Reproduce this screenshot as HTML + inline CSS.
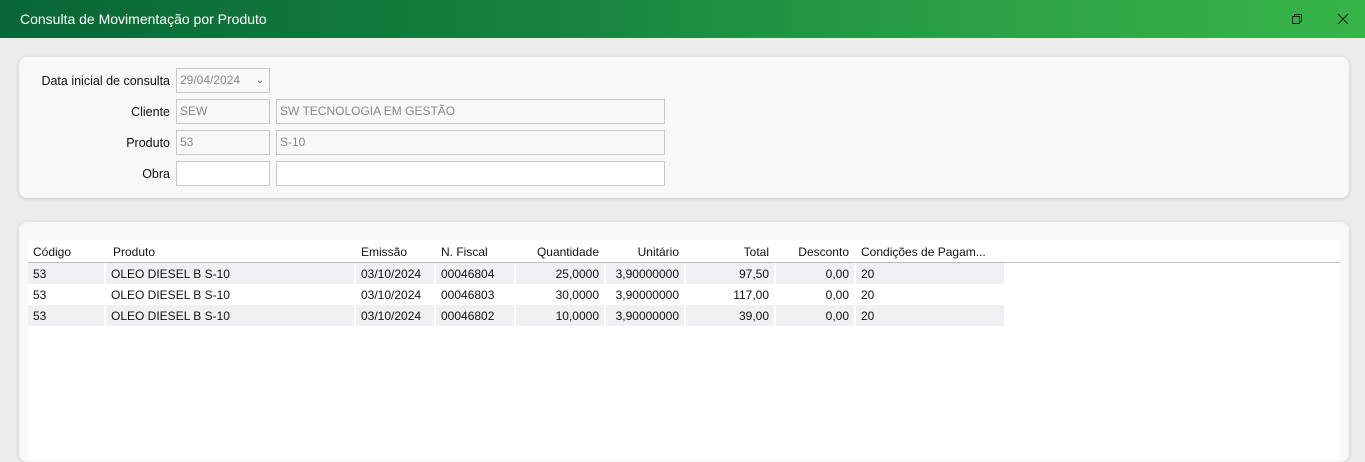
<!DOCTYPE html>
<html><head><meta charset="utf-8"><style>
*{box-sizing:border-box;margin:0;padding:0}
body{width:1365px;height:439px;overflow:hidden;background:#ececec;font-family:"Liberation Sans",sans-serif;font-size:12px;color:#111;position:relative}
.title{position:absolute;left:0;top:0;width:1365px;height:38px;background:linear-gradient(90deg,#086636 0%,#17823f 40%,#2ea446 75%,#38b449 100%);color:#fff;font-size:14px;line-height:38px;padding-left:20px}
.card{position:absolute;left:19px;width:1330px;background:#f8f8f8;border-radius:8px;box-shadow:0 1px 4px rgba(0,0,0,.15)}
.lbl{position:absolute;text-align:right;width:160px;left:-9px;font-size:12.5px}
.inp{position:absolute;height:25px;border:1px solid #c8c8c8;background:#f8f8f8;color:#888;line-height:23px;padding-left:3px;font-size:12px}
.w{background:#fff}
.tbl{position:absolute;left:9px;top:18px;width:1312px;height:220px;background:#fff}
.hdr{position:absolute;top:0;height:23px;border-bottom:1px solid #bbb;width:100%}
.c{position:absolute;height:21px;line-height:22px;padding:0 5px;white-space:nowrap;overflow:hidden;font-size:12px}
.r{text-align:right}
.g{background:#f0f0f3}
</style></head><body>
<div class="title">Consulta de Movimentação por Produto
<svg style="position:absolute;left:1291px;top:13px" width="12" height="12" viewBox="0 0 12 12"><rect x="1.5" y="3.5" width="7" height="7" fill="none" stroke="#222"/><path d="M3.5 3.5V1.5h7v7h-2" fill="none" stroke="#222"/></svg>
<svg style="position:absolute;left:1337px;top:13px" width="12" height="12" viewBox="0 0 12 12"><path d="M1 1L11 11M11 1L1 11" stroke="#222" stroke-width="1.1"/></svg>
</div>
<div class="card" style="top:57px;height:141px">
<div class="lbl" style="top:17px">Data inicial de consulta</div>
<div class="inp" style="left:157px;top:11px;width:94px">29/04/2024 <span style="position:absolute;right:5px;color:#555;font-size:10px">⌄</span></div>
<div class="lbl" style="top:48px">Cliente</div>
<div class="inp" style="left:157px;top:42px;width:94px">SEW</div>
<div class="inp" style="left:257px;top:42px;width:389px">SW TECNOLOGIA EM GESTÃO</div>
<div class="lbl" style="top:79px">Produto</div>
<div class="inp" style="left:157px;top:73px;width:94px">53</div>
<div class="inp" style="left:257px;top:73px;width:389px">S-10</div>
<div class="lbl" style="top:110px">Obra</div>
<div class="inp w" style="left:157px;top:104px;width:94px"></div>
<div class="inp w" style="left:257px;top:104px;width:389px"></div>
</div>
<div class="card" style="top:222px;height:240px">
<div class="tbl">
<div class="hdr">
<div class="c" style="left:0;width:78px;top:1px">Código</div>
<div class="c" style="left:80px;width:248px;top:1px">Produto</div>
<div class="c" style="left:328px;width:78px;top:1px">Emissão</div>
<div class="c" style="left:408px;width:78px;top:1px">N. Fiscal</div>
<div class="c r" style="left:488px;width:88px;top:1px">Quantidade</div>
<div class="c r" style="left:578px;width:78px;top:1px">Unitário</div>
<div class="c r" style="left:658px;width:88px;top:1px">Total</div>
<div class="c r" style="left:748px;width:78px;top:1px">Desconto</div>
<div class="c" style="left:828px;width:148px;top:1px">Condições de Pagam...</div>
</div>
</div>
</div>
<div style="position:absolute;left:0;top:0">
<div class="c g" style="left:28px;top:263px;width:76px">53</div><div class="c g" style="left:106px;top:263px;width:248px">OLEO DIESEL B S-10</div><div class="c g" style="left:356px;top:263px;width:78px">03/10/2024</div><div class="c g" style="left:436px;top:263px;width:78px">00046804</div><div class="c g r" style="left:516px;top:263px;width:88px">25,0000</div><div class="c g r" style="left:606px;top:263px;width:78px">3,90000000</div><div class="c g r" style="left:686px;top:263px;width:88px">97,50</div><div class="c g r" style="left:776px;top:263px;width:78px">0,00</div><div class="c g" style="left:856px;top:263px;width:148px">20</div>
<div class="c" style="left:28px;top:284px;width:76px">53</div><div class="c" style="left:106px;top:284px;width:248px">OLEO DIESEL B S-10</div><div class="c" style="left:356px;top:284px;width:78px">03/10/2024</div><div class="c" style="left:436px;top:284px;width:78px">00046803</div><div class="c r" style="left:516px;top:284px;width:88px">30,0000</div><div class="c r" style="left:606px;top:284px;width:78px">3,90000000</div><div class="c r" style="left:686px;top:284px;width:88px">117,00</div><div class="c r" style="left:776px;top:284px;width:78px">0,00</div><div class="c" style="left:856px;top:284px;width:148px">20</div>
<div class="c g" style="left:28px;top:305px;width:76px">53</div><div class="c g" style="left:106px;top:305px;width:248px">OLEO DIESEL B S-10</div><div class="c g" style="left:356px;top:305px;width:78px">03/10/2024</div><div class="c g" style="left:436px;top:305px;width:78px">00046802</div><div class="c g r" style="left:516px;top:305px;width:88px">10,0000</div><div class="c g r" style="left:606px;top:305px;width:78px">3,90000000</div><div class="c g r" style="left:686px;top:305px;width:88px">39,00</div><div class="c g r" style="left:776px;top:305px;width:78px">0,00</div><div class="c g" style="left:856px;top:305px;width:148px">20</div>
</div>
</body></html>
